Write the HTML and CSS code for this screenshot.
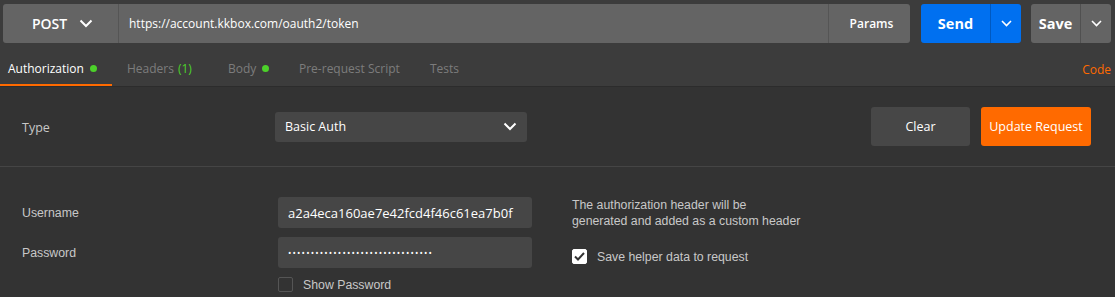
FILE: index.html
```html
<!DOCTYPE html>
<html lang="en">
  <head>
    <meta charset="UTF-8" />
    <title>Authorization</title>
    <link rel="stylesheet" href="styles.css">
  </head>
  <body>
    <header class="request-bar">
      <div class="url-group">
        <button class="method">POST
          <svg width="14" height="9" viewBox="0 0 14 9"><path d="M1.5 1.5 L7 7 L12.5 1.5" fill="none" stroke="#fff" stroke-width="2"/></svg>
        </button>
        <div class="url">https://account.kkbox.com/oauth2/token</div>
        <button class="params">Params</button>
      </div>
      <div class="split send">
        <span class="split-main">Send</span>
        <span class="split-caret"><svg width="11" height="7" viewBox="0 0 11 7"><path d="M1 1 L5.5 5.5 L10 1" fill="none" stroke="#fff" stroke-width="1.6"/></svg></span>
      </div>
      <div class="split save">
        <span class="split-main">Save</span>
        <span class="split-caret"><svg width="11" height="7" viewBox="0 0 11 7"><path d="M1 1 L5.5 5.5 L10 1" fill="none" stroke="#fff" stroke-width="1.6"/></svg></span>
      </div>
    </header>

    <nav class="tabs">
      <a class="tab active">Authorization <span class="dot"></span></a>
      <a class="tab headers">Headers <span class="count">(1)</span></a>
      <a class="tab body-tab">Body <span class="dot"></span></a>
      <a class="tab pre">Pre-request Script</a>
      <a class="tab">Tests</a>
      <a class="code">Code</a>
    </nav>

    <section class="panel">
      <div class="type-row">
        <label class="type-label">Type</label>
        <div class="select">
          Basic Auth
          <svg width="14" height="9" viewBox="0 0 14 9"><path d="M1.5 1.5 L7 7 L12.5 1.5" fill="none" stroke="#fff" stroke-width="2"/></svg>
        </div>
        <div class="actions">
          <button class="btn clear">Clear</button>
          <button class="btn update">Update Request</button>
        </div>
      </div>

      <div class="auth-body">
        <div class="fields">
          <label>Username</label>
          <div class="field">a2a4eca160ae7e42fcd4f46c61ea7b0f</div>
          <label>Password</label>
          <div class="field dots">••••••••••••••••••••••••••••••••</div>
          <span></span>
          <div class="check-line">
            <span class="box"></span>
            Show Password
          </div>
        </div>
        <div class="helper">
          <p>The authorization header will be<br>generated and added as a custom header</p>
          <div class="check-line">
            <span class="box checked">
              <svg width="11" height="9" viewBox="0 0 11 9"><path d="M1 4.5 L4 7.5 L10 1" fill="none" stroke="#333" stroke-width="2"/></svg>
            </span>
            Save helper data to request
          </div>
        </div>
      </div>
    </section>
  </body>
</html>
```

FILE: styles.css
```css
body {
  margin: 0;
  background-color: #333333;
  font-family: "Open Sans", "Liberation Sans", sans-serif;
  color: #ffffff;
  height: 297px;
  overflow: hidden;
}

button {
  font-family: inherit;
  border: none;
  color: #ffffff;
  cursor: pointer;
}

.request-bar {
  background-color: #3c3c3c;
  display: flex;
  padding: 4px 4px 0 3px;
  height: 39px;
}

.url-group {
  flex-grow: 1;
  display: flex;
  background-color: #646464;
  border-radius: 3px;
}

.method {
  width: 116px;
  background: none;
  font-size: 14px;
  font-weight: 600;
  display: flex;
  align-items: center;
  justify-content: center;
  gap: 12px;
  padding: 0 0 0 4px;
  border-right: 1px solid #555555;
}

.url {
  flex-grow: 1;
  display: flex;
  align-items: center;
  padding-left: 10px;
  font-size: 12px;
  border-right: 1px solid #555555;
}

.params {
  width: 81px;
  background: none;
  font-size: 12px;
  font-weight: 600;
  padding: 0 0 0 4px;
}

.split {
  display: flex;
  border-radius: 3px;
  margin-left: 11px;
  font-size: 14.5px;
  font-weight: 700;
}

.split-main {
  display: flex;
  align-items: center;
  justify-content: center;
  border-right: 1px solid rgba(0, 0, 0, 0.2);
}

.split-caret {
  display: flex;
  align-items: center;
  justify-content: center;
  width: 30px;
}

.send {
  background-color: #0070f0;
}

.send .split-main {
  width: 69px;
}

.save {
  background-color: #646464;
  margin-left: 10px;
}

.save .split-main {
  width: 49px;
}

.tabs {
  background-color: #3c3c3c;
  display: flex;
  align-items: flex-end;
  height: 43px;
  border-bottom: 1px solid #2c2c2c;
  font-size: 12px;
}

.tab {
  color: #7c7c7c;
  padding: 0 0 0 8px;
  height: 34px;
  box-sizing: border-box;
  display: flex;
  align-items: center;
  gap: 6px;
  white-space: nowrap;
  border-bottom: 2px solid transparent;
}

.tab.active {
  color: #ffffff;
  border-bottom-color: #ff6a00;
  width: 112px;
  margin-right: 7px;
}

.tab.headers {
  width: 101px;
}

.tab.body-tab {
  width: 71px;
}

.tab.pre {
  width: 131px;
}

.dot {
  width: 7px;
  height: 7px;
  border-radius: 50%;
  background-color: #4cd12a;
}

.count {
  color: #4cd12a;
  margin-left: -2px;
}

.code {
  margin-left: auto;
  color: #ff6a00;
  height: 34px;
  display: flex;
  align-items: center;
  padding-right: 4px;
}

.type-row {
  display: flex;
  align-items: center;
  padding: 20px 24px 20px 22px;
  border-bottom: 1px solid #454545;
}

.type-label {
  width: 253px;
  font-size: 12.5px;
  color: #c8c8c8;
  padding-top: 2px;
}

.select {
  width: 252px;
  height: 30px;
  box-sizing: border-box;
  background-color: #464646;
  border-radius: 3px;
  display: flex;
  align-items: center;
  justify-content: space-between;
  padding: 0 10px 0 10px;
  font-size: 12.5px;
}

.actions {
  margin-left: auto;
  display: flex;
  gap: 11px;
}

.btn {
  height: 39px;
  border-radius: 3px;
  font-size: 12.5px;
}

.clear {
  width: 99px;
  background-color: #474747;
}

.update {
  width: 110px;
  background-color: #ff6a00;
}

.auth-body {
  display: flex;
  padding: 30px 0 0 22px;
  font-family: "Liberation Sans", Arial, sans-serif;
  font-size: 12.3px;
}

.fields {
  display: grid;
  grid-template-columns: 256px 254px;
  row-gap: 9px;
  align-items: center;
}

.fields label {
  color: #c8c8c8;
}

.field {
  height: 31px;
  background-color: #464646;
  border-radius: 3px;
  display: flex;
  align-items: center;
  padding-left: 10px;
  font-size: 13px;
  font-family: "Open Sans", sans-serif;
}

.field.dots {
  font-size: 9px;
  letter-spacing: 1.15px;
}

.check-line {
  display: flex;
  align-items: center;
  gap: 10px;
  color: #c8c8c8;
}

.box {
  width: 15px;
  height: 15px;
  box-sizing: border-box;
  border: 1px solid #555555;
  border-radius: 2px;
  display: flex;
  align-items: center;
  justify-content: center;
}

.box.checked {
  background-color: #ffffff;
  border-color: #ffffff;
}

.helper {
  margin-left: 40px;
  color: #c8c8c8;
}

.helper p {
  margin: 0 0 20px 0;
  line-height: 16px;
}
```
